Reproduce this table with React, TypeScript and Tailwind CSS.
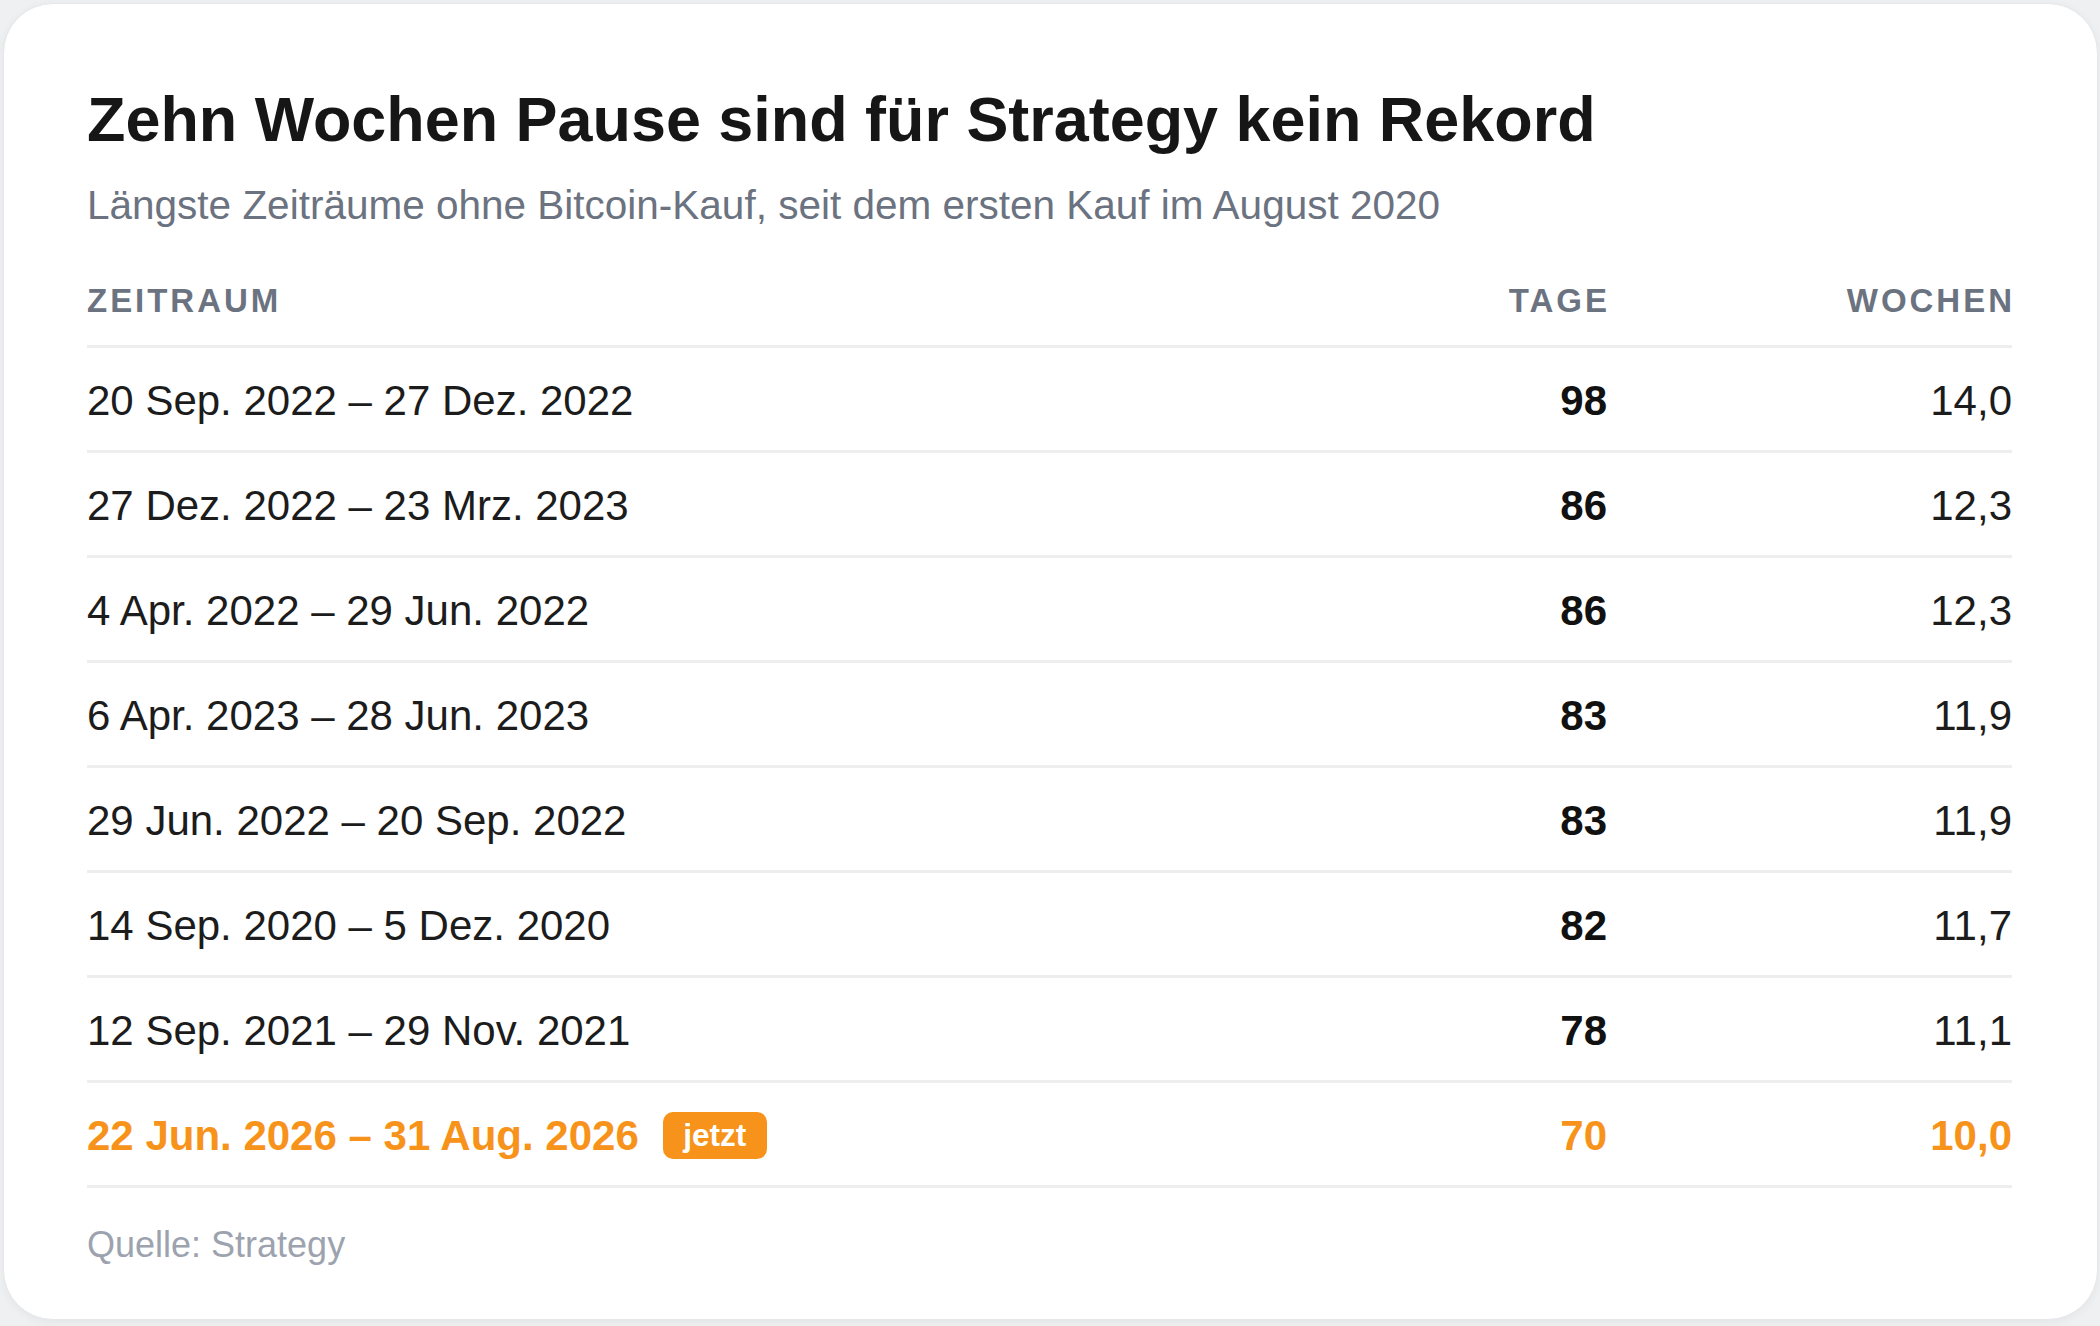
import React from "react";

type Row = { range: string; days: string; weeks: string; current?: boolean };

const rows: Row[] = [
  { range: "20 Sep. 2022 – 27 Dez. 2022", days: "98", weeks: "14,0" },
  { range: "27 Dez. 2022 – 23 Mrz. 2023", days: "86", weeks: "12,3" },
  { range: "4 Apr. 2022 – 29 Jun. 2022", days: "86", weeks: "12,3" },
  { range: "6 Apr. 2023 – 28 Jun. 2023", days: "83", weeks: "11,9" },
  { range: "29 Jun. 2022 – 20 Sep. 2022", days: "83", weeks: "11,9" },
  { range: "14 Sep. 2020 – 5 Dez. 2020", days: "82", weeks: "11,7" },
  { range: "12 Sep. 2021 – 29 Nov. 2021", days: "78", weeks: "11,1" },
  { range: "22 Jun. 2026 – 31 Aug. 2026", days: "70", weeks: "10,0", current: true },
];

export default function App() {
  return (
    <div
      className="h-[1326px] w-[2100px] bg-[#eff0f2] pt-[3px] pl-[3px] pr-[2px]"
      style={{ fontFamily: '"Liberation Sans", Arial, sans-serif' }}
    >
      <div className="rounded-[50px] border border-[#e6e7ea] bg-white pt-[84px] pb-[56px] pl-[83px] pr-[85px] shadow-[0_2px_10px_rgba(0,0,0,0.05)]">
        <h1 className="text-[62.9px] font-bold leading-none text-[#161616]">
          Zehn Wochen Pause sind für Strategy kein Rekord
        </h1>
        <p className="mt-[34px] text-[40.5px] leading-none text-[#6b7280]">
          Längste Zeiträume ohne Bitcoin-Kauf, seit dem ersten Kauf im August 2020
        </p>

        <div className="mt-[59px]">
          <div className="grid grid-cols-[1fr_300px_405px] border-b-[3px] border-[#eeeeee] pb-[28px] text-[33px] font-bold uppercase leading-none tracking-[0.09em] text-[#6b7280]">
            <div>Zeitraum</div>
            <div className="text-right -mr-[0.09em]">Tage</div>
            <div className="text-right -mr-[0.09em]">Wochen</div>
          </div>

          {rows.map((r) => (
            <div
              key={r.range}
              className={
                "grid h-[105px] grid-cols-[1fr_300px_405px] items-center border-b-[3px] border-[#eeeeee] pt-[3px] text-[42px] leading-none " +
                (r.current ? "font-bold text-[#f7931a]" : "text-[#1c1c1c]")
              }
            >
              <div className="flex items-center">
                <span>{r.range}</span>
                {r.current && (
                  <span className="ml-[24px] flex h-[47px] items-center rounded-[10px] bg-[#f7931a] px-[20.5px] text-[31.5px] font-bold leading-none text-white">
                    jetzt
                  </span>
                )}
              </div>
              <div className={"text-right font-bold " + (r.current ? "" : "text-[#111111]")}>
                {r.days}
              </div>
              <div className="text-right">{r.weeks}</div>
            </div>
          ))}
        </div>

        <p className="mt-[39px] text-[36px] leading-none text-[#9ca3af]">Quelle: Strategy</p>
      </div>
    </div>
  );
}
